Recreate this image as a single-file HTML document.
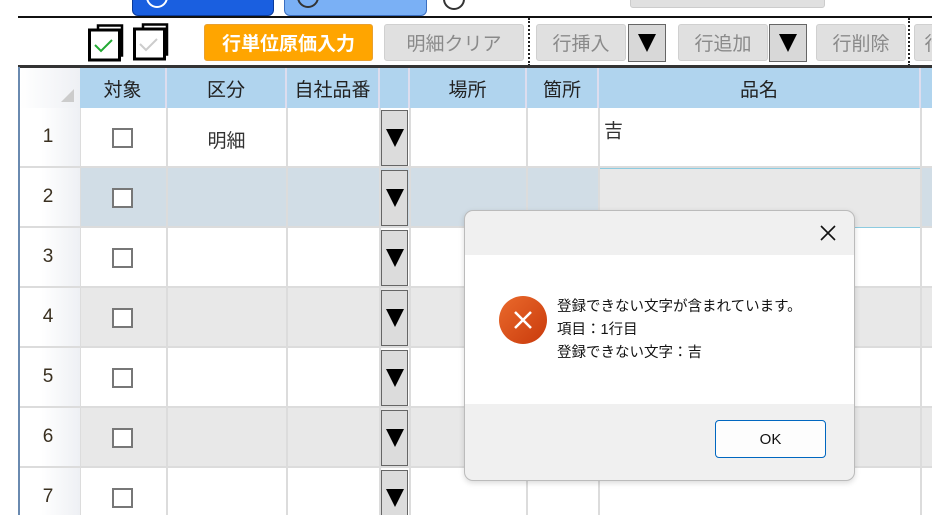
<!DOCTYPE html>
<html><head><meta charset="utf-8"><style>
*{margin:0;padding:0;box-sizing:border-box}
html{width:932px;height:515px;overflow:hidden}
body{width:932px;height:515px;overflow:hidden;background:#fff;position:relative;font-family:"Liberation Sans","Noto Sans CJK JP",sans-serif;}
.a{position:absolute}
.btn{position:absolute;background:#e0e0e0;border:1px solid #d0d0d0;border-radius:3px;color:#8a8a8a;font-size:19px;display:flex;align-items:center;justify-content:center}
.dd{position:absolute;background:#d8d8d8;border:1px solid #666;display:flex;align-items:center;justify-content:center}
.tri{width:0;height:0;border-left:9px solid transparent;border-right:9px solid transparent;border-top:18px solid #000}
.hd{position:absolute;top:68px;height:40px;background:#b0d4ee;font-size:19px;color:#222;display:flex;align-items:center;justify-content:center;border-right:2px solid #dde}
.row{position:absolute;left:18px;width:914px;height:60px;border-bottom:2px solid #dcdcdc}
.rh{position:absolute;left:20px;width:60px;height:60px;background:linear-gradient(90deg,#fff 0,#fff 35%,#eef0f4 100%);font-size:19px;color:#3a3020;display:flex;align-items:center;justify-content:center;padding-right:4px;border-bottom:2px solid #dcdcdc}
.vl{position:absolute;top:108px;width:2px;height:407px;background:#dcdcdc}
.cb{position:absolute;left:112px;width:21px;height:20px;border:2px solid #777;background:#fff}
.sd{position:absolute;left:381px;width:27px;height:56px;background:#dcdcdc;border:1px solid #666;display:flex;align-items:center;justify-content:center}
</style></head><body>
<div class="a" style="left:132px;top:-10px;width:142px;height:26px;background:#1a5fe0;border:1px solid #0a3a9a;border-radius:6px"></div>
<div class="a" style="left:146px;top:-14px;width:22px;height:22px;border:2px solid #fff;border-radius:50%"></div>
<div class="a" style="left:284px;top:-10px;width:143px;height:26px;background:#7ab0f5;border:1px solid #3a6ec0;border-radius:6px"></div>
<div class="a" style="left:297px;top:-14px;width:22px;height:22px;border:2px solid #333;border-radius:50%"></div>
<div class="a" style="left:443px;top:-12px;width:22px;height:22px;border:2px solid #333;border-radius:50%"></div>
<div class="a" style="left:630px;top:-10px;width:195px;height:18px;background:#e0e0e0;border:1px solid #ccc;border-radius:3px"></div>
<div class="a" style="left:18px;top:16px;width:914px;height:2px;background:#111"></div>
<svg class="a" style="left:88px;top:24px" width="40" height="40"><rect x="10" y="1.5" width="24" height="30" fill="#fff" stroke="#000" stroke-width="2.5"/><rect x="1.5" y="6" width="30" height="30" fill="#fff" stroke="#000" stroke-width="3"/><path d="M7 21 L13 27 L24 16" stroke="#22aa33" stroke-width="2" fill="none"/></svg>
<svg class="a" style="left:133px;top:23px" width="40" height="40"><rect x="10" y="1.5" width="24" height="30" fill="#fff" stroke="#000" stroke-width="2.5"/><rect x="1.5" y="6" width="30" height="30" fill="#fff" stroke="#000" stroke-width="3"/><path d="M7 21 L13 27 L24 16" stroke="#ccc" stroke-width="2" fill="none"/></svg>
<div class="btn" style="left:204px;top:24px;width:169px;height:37px;background:#ffa500;border-color:#e8a030;color:#fff;font-weight:bold">行単位原価入力</div>
<div class="btn" style="left:384px;top:24px;width:140px;height:37px">明細クリア</div>
<div class="a" style="left:528px;top:18px;height:48px;border-left:2px dotted #222"></div>
<div class="btn" style="left:536px;top:24px;width:90px;height:37px">行挿入</div>
<div class="dd" style="left:628px;top:24px;width:38px;height:38px"><div class="tri"></div></div>
<div class="btn" style="left:678px;top:24px;width:90px;height:37px">行追加</div>
<div class="dd" style="left:769px;top:24px;width:38px;height:38px"><div class="tri"></div></div>
<div class="btn" style="left:816px;top:24px;width:90px;height:37px">行削除</div>
<div class="a" style="left:908px;top:18px;height:48px;border-left:2px dotted #222"></div>
<div class="btn" style="left:914px;top:24px;width:40px;height:37px">行</div>
<div class="a" style="left:18px;top:65px;width:914px;height:3px;background:#333"></div>
<div class="a" style="left:20px;top:68px;width:60px;height:40px;background:linear-gradient(90deg,#fff,#eef0f4)"></div>
<div class="a" style="left:61px;top:89px;width:0;height:0;border-left:13px solid transparent;border-bottom:13px solid #ccc"></div>
<div class="hd" style="left:80px;width:87px">対象</div>
<div class="hd" style="left:167px;width:120px">区分</div>
<div class="hd" style="left:287px;width:93px">自社品番</div>
<div class="hd" style="left:380px;width:30px"></div>
<div class="hd" style="left:410px;width:117px">場所</div>
<div class="hd" style="left:527px;width:72px">箇所</div>
<div class="hd" style="left:599px;width:322px">品名</div>
<div class="hd" style="left:921px;width:20px"></div>
<div class="row" style="top:108px;background:#fff"></div>
<div class="row" style="top:168px;background:#d1dde6"></div>
<div class="row" style="top:228px;background:#fff"></div>
<div class="row" style="top:288px;background:#e8e8e8"></div>
<div class="row" style="top:348px;background:#fff"></div>
<div class="row" style="top:408px;background:#e8e8e8"></div>
<div class="row" style="top:468px;background:#fff"></div>
<div class="a" style="left:599px;top:168px;width:322px;height:60px;background:#e8e8e8;border:1px solid #8ccbe0"></div>
<div class="vl" style="left:79px"></div><div class="vl" style="left:166px"></div><div class="vl" style="left:286px"></div><div class="vl" style="left:379px"></div><div class="vl" style="left:409px"></div><div class="vl" style="left:526px"></div><div class="vl" style="left:598px"></div><div class="vl" style="left:920px"></div>
<div class="rh" style="top:108px">1</div><div class="rh" style="top:168px">2</div><div class="rh" style="top:228px">3</div><div class="rh" style="top:288px">4</div><div class="rh" style="top:348px">5</div><div class="rh" style="top:408px">6</div><div class="rh" style="top:468px">7</div>
<div class="a" style="left:18px;top:67px;width:2px;height:448px;background:#6a8ab0"></div>
<div class="cb" style="top:128px"></div><div class="cb" style="top:188px"></div><div class="cb" style="top:248px"></div><div class="cb" style="top:308px"></div><div class="cb" style="top:368px"></div><div class="cb" style="top:428px"></div><div class="cb" style="top:488px"></div>
<div class="sd" style="top:110px"><div class="tri"></div></div><div class="sd" style="top:170px"><div class="tri"></div></div><div class="sd" style="top:230px"><div class="tri"></div></div><div class="sd" style="top:290px"><div class="tri"></div></div><div class="sd" style="top:350px"><div class="tri"></div></div><div class="sd" style="top:410px"><div class="tri"></div></div><div class="sd" style="top:470px"><div class="tri"></div></div>
<div class="a" style="left:167px;top:126px;width:119px;text-align:center;font-size:19px;color:#333">明細</div>
<div class="a" style="left:604px;top:116px;font-size:19px;color:#333">吉</div>
<div class="a" style="left:464px;top:210px;width:391px;height:271px;border:1px solid #bbb;border-radius:9px;background:#f0f0f0;overflow:hidden;box-shadow:0 2px 6px rgba(0,0,0,.15)">
 <div class="a" style="left:0;top:44px;width:389px;height:149px;background:#fff"></div>
 <svg class="a" style="left:354px;top:13px" width="18" height="18"><path d="M2 2L16 16M16 2L2 16" stroke="#111" stroke-width="1.6"/></svg>
 <svg class="a" style="left:33px;top:84px" width="50" height="50"><defs><linearGradient id="g" x1="0" y1="0" x2="1" y2="1"><stop offset="0" stop-color="#ea6a2c"/><stop offset="1" stop-color="#c93a0c"/></linearGradient></defs><circle cx="25" cy="25" r="24" fill="url(#g)"/><path d="M17 17L33 33M33 17L17 33" stroke="#fff" stroke-width="2.5"/></svg>
 <div class="a" style="left:92px;top:85px;font-size:14.5px;line-height:23px;color:#111">登録できない文字が含まれています。<br>項目：1行目<br>登録できない文字：吉</div>
 <div class="a" style="left:250px;top:209px;width:111px;height:38px;background:#fdfdfd;border:1px solid #0067c0;border-radius:4px;display:flex;align-items:center;justify-content:center;font-size:15px;color:#111">OK</div>
</div>
</body></html>
